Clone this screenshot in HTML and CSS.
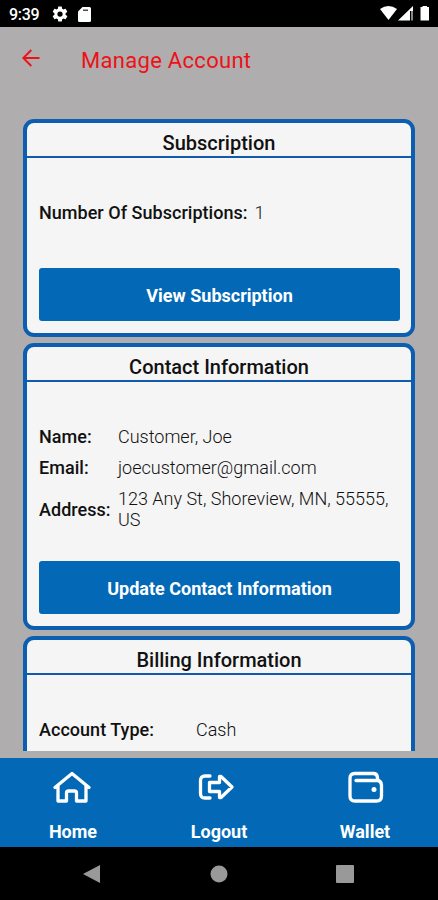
FILE: index.html
```html
<!DOCTYPE html>
<html lang="en">
<head>
<meta charset="utf-8">
<title>Manage Account</title>
<link rel="stylesheet" href="styles.css">
</head>
<body>
<div class="status">
  <span class="clock">9:39</span>
  <svg class="gear" viewBox="0 0 24 24" width="18" height="18"><path fill="#fff" fill-rule="evenodd" d="M19.4 13a7.500 7.500 0 0 0 0-2l2.100-1.700c.2-.2.3-.4.100-.6l-2-3.500c-.1-.2-.4-.3-.6-.2l-2.500 1a7.300 7.300 0 0 0-1.700-1l-.4-2.600A.5.500 0 0 0 14 2h-4a.5.500 0 0 0-.5.400L9.200 5c-.6.300-1.200.6-1.700 1L5 5c-.2-.1-.5 0-.6.200l-2 3.500c-.1.200-.1.500.1.600L4.600 11a8 8 0 0 0 0 2l-2.100 1.700c-.2.100-.2.400-.1.600l2 3.500c.1.200.4.300.6.200l2.500-1c.5.400 1.100.7 1.700 1l.4 2.600c0 .2.200.4.400.4h4c.3 0 .5-.2.500-.4l.4-2.600c.6-.3 1.200-.6 1.700-1l2.500 1c.2.100.5 0 .6-.2l2-3.500c.1-.2.100-.5-.1-.6zM12 15.500a3.500 3.500 0 1 1 0-7 3.500 3.500 0 0 1 0 7z"/></svg>
  <svg class="card-icon" viewBox="0 0 13 15" width="13" height="15"><path fill="#fff" d="M4.500 0H11.500Q13 0 13 1.500V13.500Q13 15 11.500 15H1.500Q0 15 0 13.500V4.500Z"/><path stroke="#333" stroke-width="1.300" d="M5 3.200H10"/></svg>
  <svg class="signals" viewBox="0 0 52 18" width="52" height="18"><path fill="#fff" d="M1 4Q9.500 -2 18 4L9.500 15Z"/><path fill="#fff" d="M19 15.500L34 1V6H31V15.500Z"/><path fill="#888" d="M32 6H34V15.500H32Z"/><path fill="#fff" d="M41.500 2H43.500V1H48V2H50V15.500H41.500Z"/></svg>
</div>
<header class="appbar">
  <svg class="back" viewBox="0 0 18 18" width="18" height="18"><path fill="none" stroke="#ed1118" stroke-width="1.900" d="M17.500 9H1.500M9.300 1L1.300 9L9.300 17"/></svg>
  <h1>Manage Account</h1>
</header>
<main class="content">
  <section class="panel subscription">
    <h2>Subscription</h2>
    <div class="row"><b>Number Of Subscriptions:</b><span>1</span></div>
    <button>View Subscription</button>
  </section>
  <section class="panel contact">
    <h2>Contact Information</h2>
    <div class="details">
      <b>Name:</b><span>Customer, Joe</span>
      <b>Email:</b><span>joecustomer@gmail.com</span>
      <b>Address:</b><span>123 Any St, Shoreview, MN, 55555, US</span>
    </div>
    <button>Update Contact Information</button>
  </section>
  <section class="panel billing">
    <h2>Billing Information</h2>
    <div class="row"><b class="type">Account Type:</b><span>Cash</span></div>
  </section>
</main>
<nav class="tabs">
  <a><svg viewBox="0 0 40 34" width="40" height="34"><path d="M3 17.500L20 3.500L37 17.500M6 16V31H14.500V23Q14.500 21 16.500 21H22.500Q24.500 21 24.500 23V31H34V16"/></svg><span>Home</span></a>
  <a><svg viewBox="0 0 40 34" width="40" height="34"><path d="M12 6H7Q2.500 6 2.500 10.500V23.500Q2.500 28 7 28H12M11.500 12.500H21.500V6.500H23L34 17L23 27.500H21.500V21.500H11.500Z"/></svg><span>Logout</span></a>
  <a><svg viewBox="0 0 40 34" width="40" height="34"><path d="M33.500 10V7.500Q33 3.500 29.500 3.500H10.500Q6 3.500 6 8V26Q6 31 11 31H32.500Q37.500 31 37.500 26V15Q37 10.500 33 10.500H12"/><circle cx="30" cy="19.500" r="2.500"/></svg><span>Wallet</span></a>
</nav>
<footer class="system">
  <svg viewBox="0 0 18 18" width="18" height="18"><path d="M0 9L17 0V18Z"/></svg>
  <svg viewBox="0 0 18 18" width="18" height="18"><circle cx="9" cy="9" r="8.500"/></svg>
  <svg viewBox="0 0 18 18" width="18" height="18"><rect width="18" height="18" rx="1"/></svg>
</footer>
</body>
</html>
```
FILE: styles.css
```css
* { box-sizing: border-box; }
body { margin: 0; width: 438px; height: 900px; overflow: hidden; display: flex; flex-direction: column; background: #afadad; color: #111; font: 18px/21px Roboto, sans-serif; }
svg { display: block; flex: none; }
.status { height: 27px; flex: none; display: flex; align-items: center; background: #000; color: #fff; padding: 1px 7px 0 9px; }
.clock { width: 42px; font-size: 16px; font-weight: 500; letter-spacing: -.3px; }
.card-icon { margin-left: 9px; }
.signals { margin-left: auto; }
.appbar { height: 92px; flex: none; display: flex; padding: 22px 22px 0; }
.appbar h1 { margin: 0 0 0 41px; font-size: 22px; line-height: 23px; font-weight: 400; color: #ed1118; letter-spacing: .3px; }
.content { height: 632px; flex: none; padding: 0 23px; overflow: hidden; }
.panel { border: 4px solid #0b5eb0; border-radius: 11px; background: #f5f5f5; display: flex; flex-direction: column; }
.panel h2 { margin: 0; height: 35px; flex: none; border-bottom: 2px solid #1459b0; text-align: center; font-size: 20px; line-height: 41px; font-weight: 500; }
.panel button { margin: auto 11px 12px 12px; height: 53px; flex: none; border: 0; border-radius: 3px; background: #0369b6; color: #fff; font: 700 18px/56px Roboto, sans-serif; padding: 0; }
.subscription { height: 218px; }
.contact { height: 287px; margin-top: 6px; }
.billing { height: 200px; margin-top: 6px; }
.row { display: flex; padding: 44px 12px 0; gap: 7px; }
.row span, .details span { font-weight: 300; }
b { font-weight: 500; letter-spacing: .03px; }
.type { width: 150px; }
.details { display: grid; grid-template-columns: 73px 280px; column-gap: 6px; row-gap: 10px; padding: 44px 3px 0 12px; align-items: center; margin-bottom: -10px; }
.tabs { height: 89px; flex: none; margin-top: 7px; background: #0369b6; color: #fff; display: flex; }
.tabs a { width: 146px; display: flex; flex-direction: column; align-items: center; gap: 17px; padding-top: 12px; font-weight: 700; }
.tabs svg { margin-right: 2px; fill: none; stroke: #fff; stroke-width: 3.300; stroke-linejoin: round; stroke-linecap: round; }
.tabs circle { fill: #fff; stroke: none; }
.system { flex: 1; background: #000; display: flex; justify-content: space-between; padding: 18px 84px 0 83px; }
.system svg { fill: #999; }
```
